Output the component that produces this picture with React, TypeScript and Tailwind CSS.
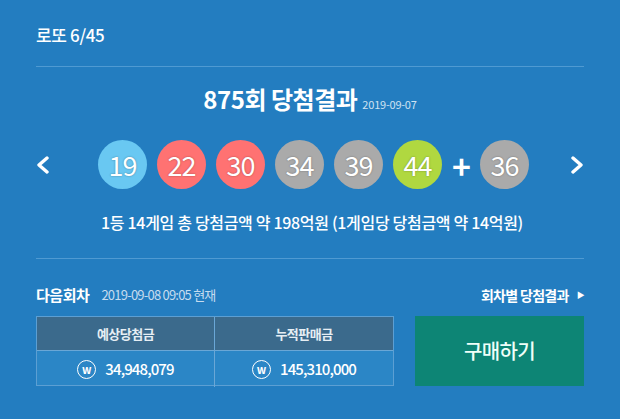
import React from "react";

const FONT = "font-['Noto_Sans_CJK_KR','Noto_Sans',sans-serif]";

const balls = [
  { n: 19, color: "bg-[#69c8f2]" },
  { n: 22, color: "bg-[#ff7272]" },
  { n: 30, color: "bg-[#ff7272]" },
  { n: 34, color: "bg-[#aaaaaa]" },
  { n: 39, color: "bg-[#aaaaaa]" },
  { n: 44, color: "bg-[#b0d840]" },
];

function Ball({ n, color }: { n: number; color: string }) {
  return (
    <span
      className={`flex h-[49px] w-[49px] items-center justify-center rounded-full ${color} text-[27px] leading-none tracking-[-0.04em] text-white [text-shadow:0_0_2px_rgba(0,0,0,0.35)]`}
    >
      {n}
    </span>
  );
}

function Chevron({ dir }: { dir: "left" | "right" }) {
  return (
    <svg width="14" height="18" viewBox="0 0 14 18" fill="none">
      <polyline
        points={dir === "left" ? "11,2 3,9 11,16" : "3,2 11,9 3,16"}
        stroke="white"
        strokeWidth="3.4"
        strokeLinecap="round"
        strokeLinejoin="round"
      />
    </svg>
  );
}

function Won() {
  return (
    <span className="flex h-[19px] w-[19px] items-center justify-center rounded-full border-[1.5px] border-white text-[11px] font-bold leading-none text-white">
      w
    </span>
  );
}

export default function App() {
  return (
    <div className={`h-[419px] w-[620px] bg-[#237dc0] px-[36px] pt-[24px] text-white ${FONT}`}>
      <div className="h-[22px] text-[17px] font-medium leading-[22px] tracking-[-0.02em]">로또 6/45</div>
      <div className="mt-[20px] h-px bg-[#4f9ad2]" />

      <div className="mt-[20px] flex h-[24px] items-baseline justify-center">
        <span className="text-[24px] font-bold leading-[24px] tracking-[-0.02em]">875회 당첨결과</span>
        <span className="ml-[5px] text-[11px] leading-none tracking-[-0.02em] text-[#cfe2f2]">2019-09-07</span>
      </div>

      <div className="mt-[29px] flex h-[49px] items-center">
        <Chevron dir="left" />
        <div className="ml-[48px] flex items-center gap-[10px]">
          {balls.map((b) => (
            <Ball key={b.n} n={b.n} color={b.color} />
          ))}
        </div>
        <span className="mx-[9px] ml-[10px] text-[32px] font-bold leading-none">+</span>
        <Ball n={36} color="bg-[#aaaaaa]" />
        <div className="flex-1" />
        <Chevron dir="right" />
      </div>

      <div className="mt-[23px] h-[20px] pl-[4px] text-center text-[16px] font-medium leading-[20px] tracking-[-0.02em]">
        1등 14게임 총 당첨금액 약 198억원 (1게임당 당첨금액 약 14억원)
      </div>
      <div className="mt-[26px] h-px bg-[#4f9ad2]" />

      <div className="mt-[26px] flex h-[20px] items-center">
        <span className="text-[15px] font-bold tracking-[-0.03em]">다음회차</span>
        <span className="ml-[12px] text-[13px] tracking-[-0.06em] text-[#c6dcef]">2019-09-08 09:05 현재</span>
        <span className="ml-auto flex items-center text-[14px] font-bold tracking-[-0.05em]">
          회차별 당첨결과
          <span className="ml-[8px] text-[8px]">▶</span>
        </span>
      </div>

      <div className="mt-[11px] flex h-[70px] gap-[21px]">
        <div className="grid w-[358px] grid-cols-2 grid-rows-[34px_36px] border border-[#5c9fd3] bg-[#2b86c6]">
          <div className="flex items-center justify-center border-b border-r border-[#6aa7d6] bg-[#3b6a8c] text-[13px] font-bold tracking-[-0.04em] text-[#e6eef4]">
            예상당첨금
          </div>
          <div className="flex items-center justify-center border-b border-[#6aa7d6] bg-[#3b6a8c] text-[13px] font-bold tracking-[-0.04em] text-[#e6eef4]">
            누적판매금
          </div>
          <div className="flex items-center justify-center gap-[9px] border-r border-[#6aa7d6]">
            <Won />
            <span className="text-[15px] font-medium tracking-[-0.06em]">34,948,079</span>
          </div>
          <div className="flex items-center justify-center gap-[9px]">
            <Won />
            <span className="text-[15px] font-medium tracking-[-0.06em]">145,310,000</span>
          </div>
        </div>
        <button className="flex flex-1 items-center justify-center bg-[#0d8575] text-[20px] font-medium tracking-[-0.03em] text-[#effff8]">
          구매하기
        </button>
      </div>
    </div>
  );
}
